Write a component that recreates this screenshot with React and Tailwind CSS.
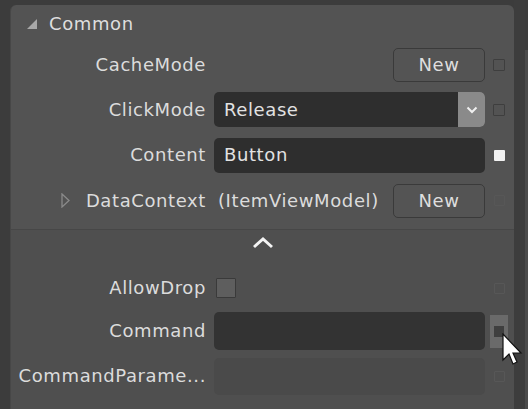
import React from 'react';

const font = { fontFamily: '"DejaVu Sans", "Noto Sans", sans-serif' };

function Square({ tone = 'dim' }) {
  if (tone === 'white') return <div className="w-[11px] h-[11px] shrink-0 bg-[#f2f2f2] rounded-[1px]" />;
  if (tone === 'faint') return <div className="w-[11px] h-[11px] shrink-0 border border-[#575757] rounded-[1px]" />;
  return <div className="w-[12px] h-[12px] shrink-0 border border-[#3e3e3e] rounded-[1px]" />;
}

function NewButton() {
  return (
    <div className="ml-auto w-[92px] h-[34px] flex items-center justify-center rounded-[5px] border border-[#3a3a3a] bg-[#545454] text-[#dedede]">
      New
    </div>
  );
}

function Row({ label, children, sq, className = '' }) {
  return (
    <div className={`grid grid-cols-[195px_271px_12px] gap-x-[8px] items-center ${className}`}>
      <div className="text-right text-[#dcdcdc] whitespace-nowrap">{label}</div>
      <div className="flex items-center">{children}</div>
      <div className="flex justify-center">{sq}</div>
    </div>
  );
}

export default function App() {
  return (
    <div className="w-[528px] h-[409px] bg-[#3c3c3c] flex overflow-hidden text-[18px] tracking-[0.6px] leading-none" style={font}>
      <div className="w-[10px] shrink-0" />
      <div className="w-[504px] shrink-0 mt-[5px] rounded-t-[6px] bg-[#535353] border-l border-[#474747] flex flex-col relative">
        <div className="flex items-center h-[38px] pl-[16px] gap-[12px] text-[#dedede]">
          <svg width="10" height="10" viewBox="0 0 10 10"><path d="M0 10 L10 0 L10 10 Z" fill="#a8a8a8" /></svg>
          <span>Common</span>
        </div>
        <Row label="CacheMode" sq={<Square />} className="h-[44px]">
          <NewButton />
        </Row>
        <Row label="ClickMode" sq={<Square />} className="h-[45px]">
          <div className="w-full h-[35px] rounded-[5px] bg-[#2e2e2e] flex items-center pl-[10px] text-[#e2e2e2]">
            <span className="flex-1">Release</span>
            <div className="w-[27px] h-[35px] rounded-r-[5px] bg-[#8a8a8a] flex items-center justify-center">
              <svg width="12" height="8" viewBox="0 0 12 8"><path d="M1.5 1.5 L6 6 L10.5 1.5" stroke="#f0f0f0" strokeWidth="2" fill="none" /></svg>
            </div>
          </div>
        </Row>
        <Row label="Content" sq={<Square tone="white" />} className="h-[46px]">
          <div className="w-full h-[35px] rounded-[5px] bg-[#2e2e2e] flex items-center pl-[10px] text-[#e2e2e2]">Button</div>
        </Row>
        <div className="grid grid-cols-[195px_271px_12px] gap-x-[8px] items-center h-[45px]">
          <div className="flex items-center justify-end gap-[16px] text-[#dcdcdc] whitespace-nowrap">
            <svg width="9" height="15" viewBox="0 0 9 15"><path d="M1 1 L8 7.5 L1 14 Z" stroke="#8a8a8a" strokeWidth="1.3" fill="none" /></svg>
            <span>DataContext</span>
          </div>
          <div className="flex items-center">
            <span className="text-[#dcdcdc] ml-[4px] whitespace-nowrap">(ItemViewModel)</span>
            <NewButton />
          </div>
          <div className="flex justify-center"><Square tone="faint" /></div>
        </div>
        <div className="h-[7px] border-b border-[#474747]" />
        <div className="flex-1 bg-[#4f4f4f] flex flex-col">
          <div className="h-[26px] flex items-center justify-center">
            <svg width="22" height="14" viewBox="0 0 22 14"><path d="M2 11 L11 3 L20 11" stroke="#f4f4f4" strokeWidth="3" fill="none" /></svg>
          </div>
          <Row label="AllowDrop" sq={<Square tone="faint" />} className="h-[42px] mt-[11px]">
            <div className="w-[20px] h-[20px] ml-[2px] bg-[#5e5e5e] border border-[#3a3a3a] rounded-[1px]" />
          </Row>
          <Row label="Command" sq={
            <div className="w-[18px] h-[33px] shrink-0 bg-[#6a6a6a] flex items-center justify-center">
              <div className="w-[10px] h-[11px] bg-[#3f3f3f]" />
            </div>
          } className="h-[44px]">
            <div className="w-full h-[38px] rounded-[5px] bg-[#333333]" />
          </Row>
          <Row label="CommandParame..." sq={<Square tone="faint" />} className="h-[46px]">
            <div className="w-full h-[37px] rounded-[5px] bg-[#4a4a4a]" />
          </Row>
        </div>
        <svg className="absolute left-[491px] top-[328px]" width="24" height="38" viewBox="0 0 24 38">
          <path d="M1 1 L1 27 L7 21 L11 31 L15 29 L11 20 L19 20 Z" fill="#ffffff" stroke="#111" strokeWidth="1.2" />
        </svg>
      </div>
      <div className="w-[11px] shrink-0 bg-[#3d3d3d]" />
      <div className="w-[3px] shrink-0 mt-[50px] bg-[#4b4b4b]" />
    </div>
  );
}
